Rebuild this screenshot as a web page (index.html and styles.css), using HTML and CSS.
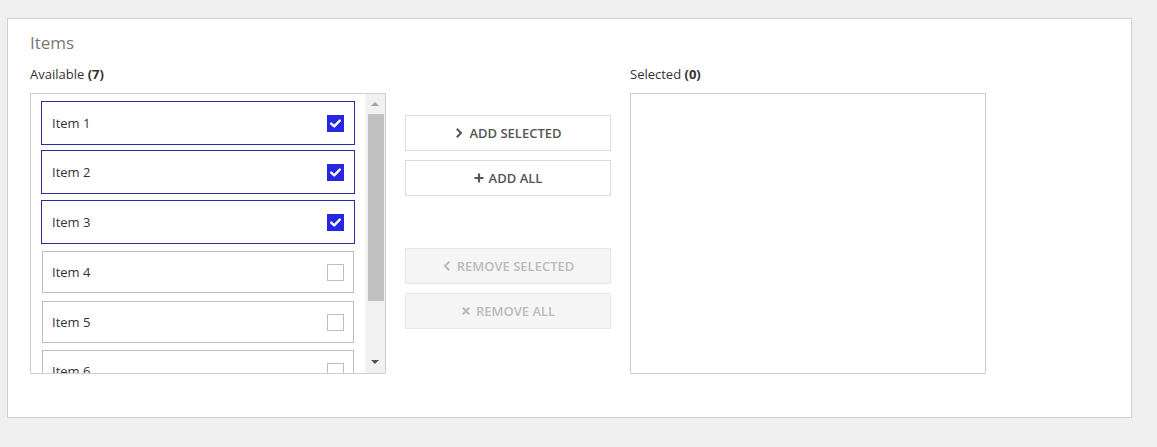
FILE: index.html
```html
<!DOCTYPE html>
<html lang="en">
<head>
<meta charset="utf-8">
<title>Items</title>
<link rel="stylesheet" href="styles.css">
</head>
<body>
<section class="panel">
  <h2 class="panel-title">Items</h2>
  <div class="picker">
    <div class="column">
      <div class="col-label">Available <b>(7)</b></div>
      <div class="listbox">
        <ul class="items">
          <li class="item selected"><span>Item 1</span><span class="check on"><svg viewBox="0 0 17 17"><path d="M4.2 8.6 L7.2 11.4 L12.8 5.6" fill="none" stroke="#fff" stroke-width="2.4" stroke-linecap="round" stroke-linejoin="round"/></svg></span></li>
          <li class="item selected"><span>Item 2</span><span class="check on"><svg viewBox="0 0 17 17"><path d="M4.2 8.6 L7.2 11.4 L12.8 5.6" fill="none" stroke="#fff" stroke-width="2.4" stroke-linecap="round" stroke-linejoin="round"/></svg></span></li>
          <li class="item selected"><span>Item 3</span><span class="check on"><svg viewBox="0 0 17 17"><path d="M4.2 8.6 L7.2 11.4 L12.8 5.6" fill="none" stroke="#fff" stroke-width="2.4" stroke-linecap="round" stroke-linejoin="round"/></svg></span></li>
          <li class="item"><span>Item 4</span><span class="check"></span></li>
          <li class="item"><span>Item 5</span><span class="check"></span></li>
          <li class="item"><span>Item 6</span><span class="check"></span></li>
          <li class="item"><span>Item 7</span><span class="check"></span></li>
        </ul>
        <div class="scrollbar">
          <span class="arrow up"></span>
          <span class="thumb"></span>
          <span class="spacer"></span>
          <span class="arrow down"></span>
        </div>
      </div>
    </div>

    <div class="actions">
      <button class="btn"><svg class="ico" viewBox="0 0 10 12"><path d="M2.8 1.8 L7 6 L2.8 10.2" fill="none" stroke="#555" stroke-width="2"/></svg>ADD SELECTED</button>
      <button class="btn"><svg class="ico" viewBox="0 0 10 12"><path d="M5 1.5 V10.5 M0.5 6 H9.5" fill="none" stroke="#555" stroke-width="2.2"/></svg>ADD ALL</button>
      <button class="btn disabled lower"><svg class="ico" viewBox="0 0 10 12"><path d="M7.2 1.8 L3 6 L7.2 10.2" fill="none" stroke="#bbb" stroke-width="2"/></svg>REMOVE SELECTED</button>
      <button class="btn disabled"><svg class="ico" viewBox="0 0 10 12"><path d="M1.8 2.8 L8.2 9.2 M8.2 2.8 L1.8 9.2" fill="none" stroke="#bbb" stroke-width="2.2"/></svg>REMOVE ALL</button>
    </div>

    <div class="column">
      <div class="col-label">Selected <b>(0)</b></div>
      <div class="listbox empty"></div>
    </div>
  </div>
</section>
</body>
</html>
```

FILE: styles.css
```css
html, body {
  margin: 0;
  padding: 0;
  background: #efefef;
  font-family: "Open Sans", "Liberation Sans", sans-serif;
  color: #333;
}

.panel {
  box-sizing: border-box;
  width: 1125px;
  margin: 18px 0 0 7px;
  padding: 13px 22px 43px 22px;
  background: #fff;
  border: 1px solid #cfcfcf;
}

.panel-title {
  margin: 0;
  font-size: 17px;
  line-height: 22px;
  font-weight: 400;
  color: #777;
}

.picker {
  display: flex;
  align-items: flex-start;
  margin-top: 11px;
}

.column {
  width: 356px;
  display: flex;
  flex-direction: column;
}

.col-label {
  font-size: 13px;
  line-height: 18px;
  margin-bottom: 10px;
  color: #333;
}

.col-label b {
  font-weight: 700;
}

.listbox {
  box-sizing: border-box;
  height: 281px;
  border: 1px solid #d0d0d0;
  display: flex;
  overflow: hidden;
  background: #fff;
}

.items {
  list-style: none;
  margin: 0;
  padding: 7px 10px 0 10px;
  flex: 1;
  overflow: hidden;
  display: flex;
  flex-direction: column;
}

/* unselected rows sit 1px inside the selected rows' outline */
.item {
  box-sizing: border-box;
  flex: none;
  height: 42px;
  margin: 1px 1px 7px 1px;
  padding: 0 9px 0 9px;
  border: 1px solid #bdbdbd;
  display: flex;
  align-items: center;
  justify-content: space-between;
  font-size: 13px;
  color: #333;
}

.item:nth-child(5) {
  margin-bottom: 6px;
}

.item.selected {
  height: 44px;
  margin: 0 0 6px 0;
  padding: 0 10px 0 10px;
  border-color: #2b2b9c;
}

.item.selected:first-child {
  margin-bottom: 5px;
}

.check {
  box-sizing: border-box;
  width: 17px;
  height: 17px;
  border: 1px solid #bdbdbd;
  background: #fff;
  display: block;
}

.check.on {
  border: none;
  background: #2626e3;
}

.check svg {
  display: block;
  width: 17px;
  height: 17px;
}

.scrollbar {
  width: 20px;
  flex: none;
  background: #f1f1f1;
  display: flex;
  flex-direction: column;
  align-items: center;
}

.arrow {
  width: 0;
  height: 0;
  border-left: 4px solid transparent;
  border-right: 4px solid transparent;
}

.arrow.up {
  border-bottom: 4px solid #a3a3a3;
  margin: 8px 0 8px 0;
}

.arrow.down {
  border-top: 4px solid #505050;
  margin: 0 0 9px 0;
}

.thumb {
  width: 16px;
  height: 187px;
  background: #c1c1c1;
  margin-left: 1px;
}

.spacer {
  flex: 1;
}

.actions {
  width: 206px;
  margin: 0 19px;
  padding-top: 50px;
  display: flex;
  flex-direction: column;
  gap: 9px;
}

.btn {
  box-sizing: border-box;
  height: 36px;
  width: 206px;
  border: 1px solid #dcdcdc;
  background: #fff;
  color: #555;
  font-family: inherit;
  font-size: 13px;
  font-weight: 600;
  display: flex;
  align-items: center;
  justify-content: center;
  gap: 5px;
  padding: 0;
  cursor: pointer;
}

.btn .ico {
  width: 10px;
  height: 12px;
}

.btn.disabled {
  background: #f5f5f5;
  border-color: #e6e6e6;
  color: #bbb;
  cursor: default;
}

.btn.lower {
  margin-top: 43px;
}

.listbox.empty {
  display: block;
}
```
